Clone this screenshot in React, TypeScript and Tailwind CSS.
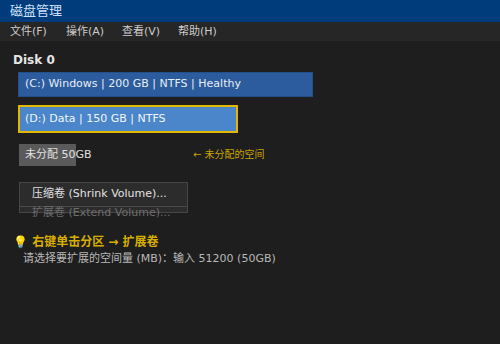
import React from "react";

const font = { fontFamily: '"DejaVu Sans", "Noto Sans CJK SC", sans-serif' };

export default function App() {
  return (
    <div className="w-[500px] h-[344px] bg-[#1e1e1e] overflow-hidden" style={font}>
      <div className="h-[22px] bg-[#003c7b] px-[10px] pt-[3px] text-[13px] leading-[16px] text-[#cfe0fa]">
        磁盘管理
      </div>
      <div className="h-[19px] bg-[#262626] flex pl-[10px] pt-[2px] text-[11px] leading-[16px] text-[#cccccc]">
        <div className="w-[56px] whitespace-nowrap">文件(F)</div>
        <div className="w-[56px] whitespace-nowrap">操作(A)</div>
        <div className="w-[56px] whitespace-nowrap">查看(V)</div>
        <div className="w-[56px] whitespace-nowrap">帮助(H)</div>
      </div>
      <div className="pt-[12px] pl-[13px]">
        <div className="text-[12px] leading-[15px] font-bold text-[#e6e6e6]">Disk 0</div>
        <div className="ml-[5px] mt-[4px] w-[295px] h-[25px] bg-[#2c5c9d] border border-[#24508a] flex items-center pl-[6px] text-[11px] text-[#e8eef6] whitespace-nowrap">
          (C:) Windows | 200 GB | NTFS | Healthy
        </div>
        <div className="ml-[5px] mt-[8px] w-[220px] h-[28px] bg-[#4a86c9] border-2 border-[#e2b800] flex items-center pl-[5px] text-[11px] text-[#f2f6fb] whitespace-nowrap">
          (D:) Data | 150 GB | NTFS
        </div>
        <div className="ml-[6px] mt-[11px] flex items-center">
          <div className="w-[57px] h-[22px] bg-[#5a5a5a] flex items-center pl-[6px] text-[11px] text-[#e0e0e0] whitespace-nowrap">
            未分配 50GB
          </div>
          <div className="ml-[117px] text-[10px] leading-[12px] text-[#c9a200] whitespace-nowrap">← 未分配的空间</div>
        </div>
        <div className="ml-[6px] mt-[16px] w-[169px] h-[31px] bg-[#2c2c2c] border border-[#464646] flex flex-col text-[11px] whitespace-nowrap">
          <div className="h-[23px] shrink-0 flex items-center pl-[12px] text-[#e2e2e2]">压缩卷 (Shrink Volume)...</div>
          <div className="h-px bg-[#4a4a4a] shrink-0" />
          <div className="h-[11px] leading-[11px] pl-[12px] text-[#6e6e6e] shrink-0">扩展卷 (Extend Volume)...</div>
        </div>
        <div className="mt-[21px] text-[12px] leading-[16px] font-semibold text-[#d8ae00] whitespace-nowrap">
          💡 右键单击分区 → 扩展卷
        </div>
        <div className="mt-[2px] ml-[10px] text-[11px] leading-[14px] text-[#b8b8b8] whitespace-nowrap">
          请选择要扩展的空间量 (MB)：输入 51200 (50GB)
        </div>
      </div>
    </div>
  );
}
